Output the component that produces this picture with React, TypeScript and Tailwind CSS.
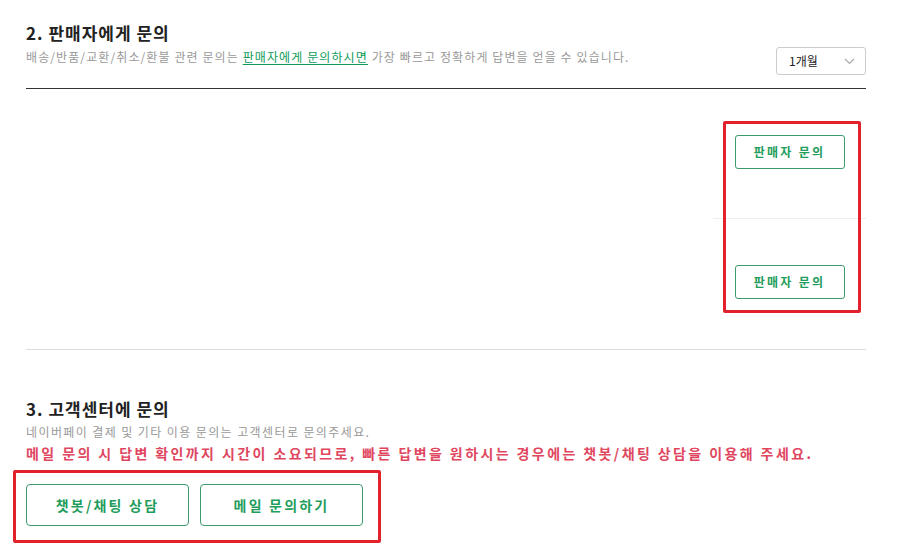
import React from 'react';

const font = { fontFamily: '"Noto Sans CJK KR", "Noto Sans", sans-serif' };

function SellerButton() {
  return (
    <button className="w-[110px] h-[34px] border border-[#3c9a6c] rounded-[3px] bg-white text-[12px] font-bold text-[#1f9d5c] tracking-[2.3px]">
      판매자 문의
    </button>
  );
}

function Row({ line }: { line?: boolean }) {
  return (
    <div className="flex h-[130px]">
      <div className="flex-1" />
      <div className={`w-[153px] flex justify-center pt-[46px] ${line ? 'border-b border-[#eee]' : ''}`}>
        <SellerButton />
      </div>
    </div>
  );
}

export default function App() {
  return (
    <div className="relative w-[897px] h-[560px] overflow-hidden bg-white pl-[26px] pr-[31px] pt-[21px]" style={font}>
      {/* 2. 판매자에게 문의 */}
      <h2 className="text-[17px] font-bold leading-[24px] text-[#222] tracking-[1px]">2. 판매자에게 문의</h2>
      <div className="flex items-start justify-between mt-[2px] h-[42px] border-b border-[#333]">
        <p className="text-[12px] leading-[20px] text-[#999] tracking-[1.1px]">
          배송/반품/교환/취소/환불 관련 문의는{' '}
          <a className="text-[#0e9b5a] underline underline-offset-2">판매자에게 문의하시면</a> 가장 빠르고 정확하게 답변을 얻을 수 있습니다.
        </p>
        <div className="w-[90px] h-[28px] border border-[#ccc] rounded-[3px] flex items-center justify-between pl-[12px] pr-[10px]">
          <span className="text-[12px] text-[#222]">1개월</span>
          <svg width="11" height="7" viewBox="0 0 11 7" fill="none">
            <path d="M1 1l4.5 4.5L10 1" stroke="#aaa" strokeWidth="1.2" />
          </svg>
        </div>
      </div>
      <div className="border-b border-[#ddd]">
        <Row line />
        <Row />
      </div>

      {/* 3. 고객센터에 문의 */}
      <h2 className="mt-[47px] text-[17px] font-bold leading-[24px] text-[#222] tracking-[1px]">3. 고객센터에 문의</h2>
      <p className="mt-[1px] text-[12px] leading-[20px] text-[#999] tracking-[1.4px]">네이버페이 결제 및 기타 이용 문의는 고객센터로 문의주세요.</p>
      <p className="text-[14px] font-bold leading-[22px] text-[#e0475f] tracking-[2.4px] whitespace-nowrap">
        메일 문의 시 답변 확인까지 시간이 소요되므로, 빠른 답변을 원하시는 경우에는 챗봇/채팅 상담을 이용해 주세요.
      </p>
      <div className="flex gap-[11px] mt-[20px]">
        <button className="w-[163px] h-[42px] border border-[#3c9a6c] rounded-[4px] bg-white text-[14px] font-bold text-[#1f9d5c] tracking-[2.2px]">
          챗봇/채팅 상담
        </button>
        <button className="w-[163px] h-[42px] border border-[#3c9a6c] rounded-[4px] bg-white text-[14px] font-bold text-[#1f9d5c] tracking-[2.2px]">
          메일 문의하기
        </button>
      </div>

      {/* annotation boxes */}
      <div className="absolute left-[723px] top-[121px] w-[138px] h-[192px] border-[3px] border-[#e1222c] rounded-[2px]" />
      <div className="absolute left-[13px] top-[470px] w-[368px] h-[73px] border-[3px] border-[#e1222c] rounded-[2px]" />
    </div>
  );
}
